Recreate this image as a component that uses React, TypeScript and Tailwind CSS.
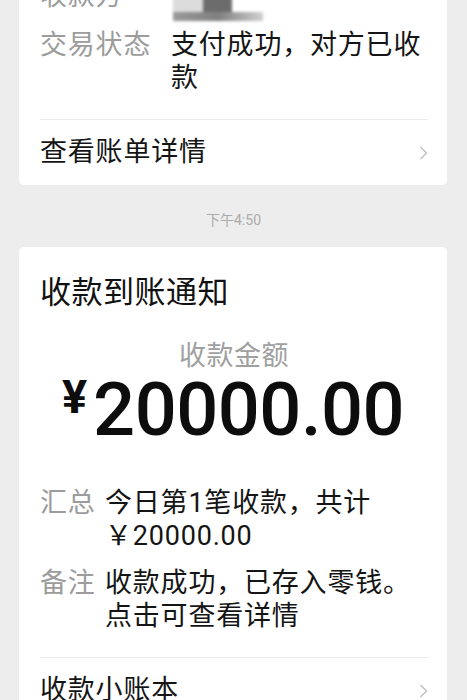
const cjk = "font-['Roboto','Noto_Sans_CJK_SC',sans-serif]"

function Chevron() {
  return (
    <svg width="9" height="14" viewBox="0 0 9 14" fill="none" className="shrink-0">
      <polyline points="1.5,1 7.5,7 1.5,13" stroke="#c4c4c4" strokeWidth="1.6" />
    </svg>
  )
}

function FooterRow({ label }: { label: string }) {
  return (
    <div className="flex h-[66px] items-center justify-between border-t border-[#ececec]">
      <span className="text-[27px] leading-[33px] tracking-[0.8px] text-[#151515]">{label}</span>
      <Chevron />
    </div>
  )
}

export default function App() {
  return (
    <div className={`h-[700px] w-[467px] overflow-hidden bg-[#ededed] ${cjk}`}>
      {/* 转账卡片（上半部分已滚出屏幕） */}
      <div className="mx-[19px] mt-[-48px] w-[428px] rounded-[5px] bg-white pl-[21px] pr-[19px] pt-[28px]">
        <div className="flex flex-col gap-[16px] pb-[24px]">
          <div className="flex">
            <span className="w-[131px] shrink-0 text-[27px] leading-[33px] tracking-[0.8px] text-[#9c9c9c]">收款方</span>
            <div className="h-[33px]">
              <div className="ml-[2px] flex h-[42px] w-[90px] flex-col blur-[1.5px]">
                <div className="flex h-[32px]">
                  <div className="w-[30px] bg-[#dcdcdc]" />
                  <div className="w-[29px] bg-[#6c6c6c]" />
                  <div className="flex-1 bg-white" />
                </div>
                <div className="h-[9px] bg-gradient-to-r from-[#9a9a9a] via-[#808080] to-[#d0d0d0]" />
              </div>
            </div>
          </div>
          <div className="flex">
            <span className="w-[131px] shrink-0 text-[27px] leading-[33px] tracking-[0.8px] text-[#9c9c9c]">交易状态</span>
            <span className="text-[27px] leading-[33px] tracking-[0.8px] text-[#151515]">支付成功，对方已收款</span>
          </div>
        </div>
        <FooterRow label="查看账单详情" />
      </div>

      <div className="mb-[17px] mt-[25px] text-center text-[14px] leading-[20px] text-[#ababab]">下午4:50</div>

      {/* 收款到账通知 */}
      <div className="mx-[19px] w-[428px] rounded-[5px] bg-white pl-[21px] pr-[19px] pt-[26px]">
        <h2 className="text-[31px] leading-[40px] tracking-[0.5px] text-[#111]">收款到账通知</h2>
        <p className="mt-[27px] text-center text-[27px] leading-[33px] tracking-[0.5px] text-[#a0a0a0]">收款金额</p>
        <div className="flex items-start justify-center pr-[2px] text-[#0d0d0d]">
          <span className="mt-[2px] text-[47px] font-bold leading-[44px]">¥</span>
          <span className="ml-[6px] text-[74px] font-medium leading-none tracking-[-0.5px]">20000.00</span>
        </div>
        <div className="mt-[40px] flex flex-col gap-[14px] pb-[24px]">
          <div className="flex">
            <span className="w-[65px] shrink-0 text-[27px] leading-[33px] tracking-[0.8px] text-[#9c9c9c]">汇总</span>
            <span className="text-[27px] leading-[33px] tracking-[0.8px] text-[#151515]">
              今日第1笔收款，共计
              <br />
              ￥20000.00
            </span>
          </div>
          <div className="flex">
            <span className="w-[65px] shrink-0 text-[27px] leading-[33px] tracking-[0.8px] text-[#9c9c9c]">备注</span>
            <span className="text-[27px] leading-[33px] tracking-[0.8px] text-[#151515]">
              收款成功，已存入零钱。
              <br />
              点击可查看详情
            </span>
          </div>
        </div>
        <FooterRow label="收款小账本" />
      </div>
    </div>
  )
}
